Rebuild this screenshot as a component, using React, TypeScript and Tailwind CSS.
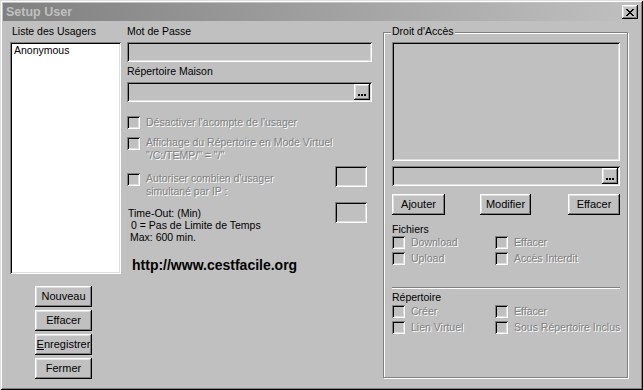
import React from "react";

const sunken =
  "shadow-[inset_1px_1px_0_#808080,inset_-1px_-1px_0_#ffffff,inset_2px_2px_0_#000000,inset_-2px_-2px_0_#dfdfdf]";
const raised =
  "shadow-[inset_-1px_-1px_0_#000000,inset_1px_1px_0_#ffffff,inset_-2px_-2px_0_#808080,inset_2px_2px_0_#dfdfdf]";
const dis = "text-[#808080] [text-shadow:1px_1px_0_#ffffff]";

function Btn({ children, w }: { children: React.ReactNode; w: string }) {
  return (
    <div className={`${w} h-[21px] bg-[#c0c0c0] ${raised} flex items-center justify-center text-black leading-none text-[11px]`}>
      {children}
    </div>
  );
}

function Dots() {
  return (
    <div className={`w-[16px] h-[16px] bg-[#c0c0c0] ${raised} flex items-end justify-center gap-[1px] pb-[4px] shrink-0`}>
      <span className="w-[2px] h-[2px] bg-black" />
      <span className="w-[2px] h-[2px] bg-black" />
      <span className="w-[2px] h-[2px] bg-black" />
    </div>
  );
}

function Box() {
  return <span className={`block w-[13px] h-[13px] bg-[#c0c0c0] shrink-0 ${sunken}`} />;
}

function Check({ label }: { label: string }) {
  return (
    <div className="flex items-center gap-[6px] h-[13px]">
      <Box />
      <span className={`${dis} whitespace-nowrap leading-[13px]`}>{label}</span>
    </div>
  );
}

export default function App() {
  return (
    <div
      className="w-[643px] h-[390px] bg-[#c0c0c0] p-[3px] text-[10.5px] text-black shadow-[inset_1px_1px_0_#dfdfdf,inset_-1px_-1px_0_#000000,inset_2px_2px_0_#ffffff,inset_-2px_-2px_0_#808080] font-['Liberation_Sans',Arial,sans-serif] overflow-hidden"
    >
      {/* Title bar */}
      <div className="h-[18px] flex items-start justify-between bg-[linear-gradient(to_right,#808080,#c0c0c0)]">
        <span className="pl-[3px] leading-[18px] text-[12.5px] font-bold text-[#c0c0c0]">Setup User</span>
        <div className={`mt-[2px] mr-[2px] w-[16px] h-[14px] bg-[#c0c0c0] ${raised} flex items-center justify-center`}>
          <svg width="8" height="7" viewBox="0 0 8 7" shapeRendering="crispEdges">
            <path d="M0 0h2v1H0zM1 1h2v1H1zM2 2h4v1H2zM3 3h2v1H3zM2 4h4v1H2zM1 5h2v1H1zM0 6h2v1H0zM6 0h2v1H6zM5 1h2v1H5zM5 5h2v1H5zM6 6h2v1H6z" fill="#000" />
          </svg>
        </div>
      </div>

      {/* Body */}
      <div className="flex pt-[4px] pl-[7px]">
        {/* Left column */}
        <div className="w-[111px] flex flex-col">
          <div className="h-[13px] leading-[13px] pl-[2px] whitespace-nowrap">Liste des Usagers</div>
          <div className={`mt-[4px] h-[232px] bg-white ${sunken} pl-[4px] pt-[2px]`}>
            <div className="leading-[13px]">Anonymous</div>
          </div>
          <div className="mt-[12px] ml-[25px] flex flex-col gap-[3px]">
            <Btn w="w-[57px]">Nouveau</Btn>
            <Btn w="w-[57px]">Effacer</Btn>
            <Btn w="w-[57px]">
              <span>
                <span className="underline">E</span>nregistrer
              </span>
            </Btn>
            <Btn w="w-[57px]">Fermer</Btn>
          </div>
        </div>

        {/* Middle column */}
        <div className="ml-[6px] w-[245px] flex flex-col">
          <div className="h-[13px] leading-[13px]">Mot de Passe</div>
          <div className={`mt-[4px] h-[20px] ${sunken}`} />
          <div className="mt-[3px] h-[13px] leading-[13px]">Répertoire Maison</div>
          <div className={`mt-[4px] h-[20px] ${sunken} flex items-center justify-end pr-[2px]`}>
            <Dots />
          </div>

          <div className="mt-[14px]">
            <Check label="Désactiver l'acompte de l'usager" />
          </div>

          <div className="mt-[7px] flex items-start gap-[6px]">
            <div className="mt-[1px]">
              <Box />
            </div>
            <div className={`${dis} leading-[13px] whitespace-nowrap`}>
              <div>Affichage du Répertoire en Mode Virtuel</div>
              <div>"/C:/TEMP/" = "/"</div>
            </div>
          </div>

          <div className="mt-[4px] flex items-start justify-between">
            <div className="pt-[6px] flex items-start gap-[6px]">
              <div className="mt-[1px]">
                <Box />
              </div>
              <div className={`${dis} leading-[13px] whitespace-nowrap`}>
                <div>Autoriser combien d'usager</div>
                <div>simultané par IP :</div>
              </div>
            </div>
            <div className={`w-[32px] h-[21px] mr-[5px] ${sunken}`} />
          </div>

          <div className="mt-[4px] flex items-start justify-between">
            <div className="pt-[5px] leading-[12px] whitespace-nowrap">
              <div className="pl-[1px]">Time-Out: (Min)</div>
              <div className="pl-[4px]">0 = Pas de Limite de Temps</div>
              <div className="pl-[3px]">Max: 600 min.</div>
            </div>
            <div className={`w-[32px] h-[21px] mr-[5px] ${sunken}`} />
          </div>

          <div className="mt-[14px] pl-[5px] text-[14px] leading-[16px] font-bold whitespace-nowrap">
            http://www.cestfacile.org
          </div>
        </div>

        {/* Right group */}
        <div className="ml-[11px] mt-[7px] w-[245px] h-[346px] relative border border-[#808080] shadow-[inset_1px_1px_0_#ffffff,1px_1px_0_#ffffff] pt-[9px] pl-[8px]">
          <span className="absolute left-[7px] top-[-8px] px-[1px] bg-[#c0c0c0] leading-[13px]">Droit d'Accès</span>
          <div className="w-[228px] flex flex-col">
            <div className={`h-[119px] ${sunken}`} />
            <div className={`mt-[5px] h-[20px] ${sunken} flex items-center justify-end pr-[2px]`}>
              <Dots />
            </div>
            <div className="mt-[8px] flex">
              <Btn w="w-[53px]">Ajouter</Btn>
              <div className="ml-[35px]">
                <Btn w="w-[51px]">Modifier</Btn>
              </div>
              <div className="ml-auto">
                <Btn w="w-[52px]">Effacer</Btn>
              </div>
            </div>
            <div className="mt-[8px] h-[13px] leading-[13px]">Fichiers</div>
            <div className="grid grid-cols-[103px_1fr] gap-y-[3px]">
              <Check label="Download" />
              <Check label="Effacer" />
              <Check label="Upload" />
              <Check label="Accès Interdit" />
            </div>
            <div className="mt-[22px] h-[2px] border-t border-t-[#808080] border-b border-b-white" />
            <div className="mt-[2px] h-[13px] leading-[13px]">Répertoire</div>
            <div className="mt-[1px] grid grid-cols-[103px_1fr] gap-y-[3px]">
              <Check label="Créer" />
              <Check label="Effacer" />
              <Check label="Lien Virtuel" />
              <Check label="Sous Répertoire Inclus" />
            </div>
          </div>
        </div>
      </div>
    </div>
  );
}
